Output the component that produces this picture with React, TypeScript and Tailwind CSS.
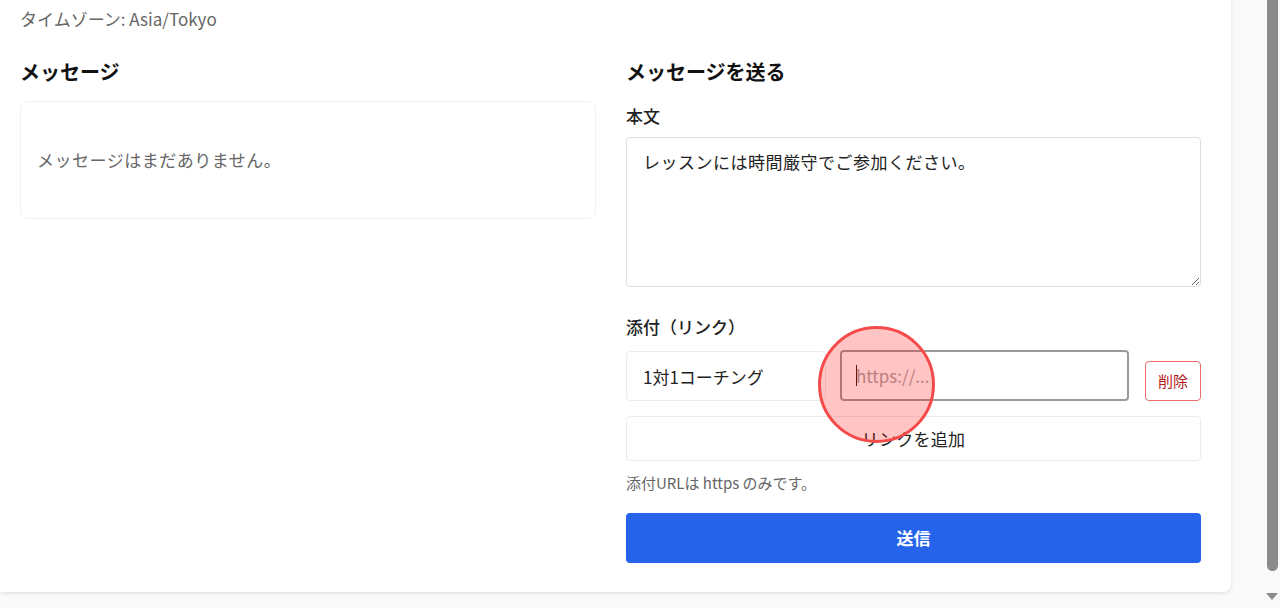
import React from "react";

const FONT = "font-['Noto_Sans_CJK_JP','Noto_Sans',sans-serif]";

// Thin fake scrollbar on the right edge (thumb reaches nearly to the bottom).
function FakeScrollbar() {
  return (
    <div className="flex w-4 shrink-0 flex-col items-center bg-[#f9f9f9]">
      <div className="h-[571px] w-[11px] rounded-b-full bg-[#8a8a8a]" />
      <div className="mt-[22px] h-0 w-0 border-x-[6px] border-t-[7px] border-x-transparent border-t-[#8a8a8a]" />
    </div>
  );
}

export default function App() {
  return (
    <div className={`flex h-[608px] w-[1280px] overflow-hidden bg-[#fafafa] ${FONT}`}>
      <div className="flex flex-1 items-start">
        <div className="relative w-[1231px] rounded-br-lg bg-white pb-[29px] pl-5 pr-[30px] pt-[7px] shadow-[0_1px_4px_rgba(0,0,0,0.12)]">
          <p className="text-[17px] leading-6 text-[#666]">タイムゾーン: Asia/Tokyo</p>

          <div className="mt-[27px] grid grid-cols-[576px_575px] gap-x-[30px]">
            {/* left: received messages */}
            <section>
              <h2 className="text-xl font-bold leading-7 text-[#111]">メッセージ</h2>
              <div className="mt-[15px] flex h-[118px] items-center rounded-lg border border-[#f0f0f0] px-4">
                <p className="text-[17px] leading-6 tracking-[0.5px] text-[#666]">メッセージはまだありません。</p>
              </div>
            </section>

            {/* right: compose */}
            <section className="flex flex-col">
              <h2 className="text-xl font-bold leading-7 text-[#111]">メッセージを送る</h2>
              <label className="mt-[18px] text-[17px] font-medium leading-6 text-[#222]">本文</label>
              <textarea
                className="mt-[9px] h-[150px] w-full resize-y rounded border border-[#dedede] px-4 pt-3 text-[17px] leading-6 tracking-[0.5px] text-[#222] outline-none"
                defaultValue="レッスンには時間厳守でご参加ください。"
              />

              <label className="mt-[28px] text-[17px] font-medium leading-6 text-[#222]">添付（リンク）</label>
              <div className="mt-3 flex h-[50px] items-end">
                <input
                  className="h-[50px] w-[200px] rounded border border-[#ececec] px-4 text-[17px] text-[#222] outline-none"
                  defaultValue="1対1コーチング"
                />
                <div className="relative ml-[14px] h-[51px] w-[289px]">
                  <input
                    className="h-full w-full rounded border-2 border-[#9a9a9a] px-[14px] text-[17px] text-[#222] outline-none placeholder:text-[#a5a5a5]"
                    placeholder="https://..."
                  />
                  <span className="absolute left-[16px] top-[15px] h-[21px] w-px bg-[#222]" />
                </div>
                <button className="ml-4 h-10 w-14 rounded border border-[#f16b6b] text-[15px] text-[#b31b1b]">
                  削除
                </button>
              </div>

              <button className="mt-[15px] h-[45px] w-full rounded border border-[#ececec] text-[17px] tracking-[0.3px] text-[#222]">
                リンクを追加
              </button>
              <p className="mt-3 text-[15px] leading-5 text-[#666]">添付URLは https のみです。</p>
              <button className="mt-5 h-[50px] w-full rounded bg-[#2563eb] text-[17px] font-bold text-white">
                送信
              </button>
            </section>
          </div>

          {/* touch indicator overlay */}
          <div className="pointer-events-none absolute left-[818px] top-[326px] h-[117px] w-[117px] rounded-full border-[3px] border-[#f54a4a] bg-[rgba(255,0,0,0.23)]" />
        </div>
      </div>
      <FakeScrollbar />
    </div>
  );
}
